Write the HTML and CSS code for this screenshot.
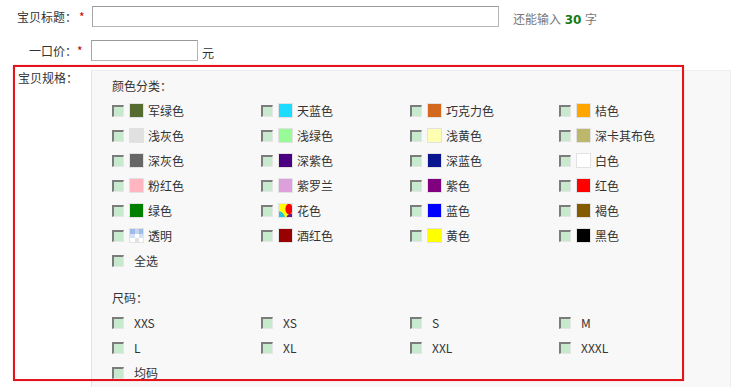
FILE: index.html
```html
<!DOCTYPE html>
<html lang="zh-CN">
<head>
<meta charset="utf-8">
<title>宝贝规格</title>
<link rel="stylesheet" href="styles.css">
</head>
<body>
<div class="page">
  <div class="field f1">
    <span class="lbl">宝贝标题：</span><span class="req">*</span>
    <input class="txt t-title" type="text">
    <span class="tip">还能输入 <b>30</b> 字</span>
  </div>
  <div class="field f2">
    <span class="lbl">一口价：</span><span class="req">*</span>
    <input class="txt t-price" type="text">
    <span class="unit">元</span>
  </div>
  <div class="spec">
    <div class="spec-lbl">宝贝规格：</div>
    <div class="panel">
      <div class="gtitle">颜色分类：</div>
      <ul class="grid">
        <li><i class="cb"></i><i class="sw" style="background:#556b2f"></i><span>军绿色</span></li>
        <li><i class="cb"></i><i class="sw" style="background:#1edcff"></i><span>天蓝色</span></li>
        <li><i class="cb"></i><i class="sw" style="background:#d2691e"></i><span>巧克力色</span></li>
        <li><i class="cb"></i><i class="sw" style="background:#ffa500"></i><span>桔色</span></li>
        <li><i class="cb"></i><i class="sw" style="background:#e0e0e0"></i><span>浅灰色</span></li>
        <li><i class="cb"></i><i class="sw" style="background:#98fb98"></i><span>浅绿色</span></li>
        <li><i class="cb"></i><i class="sw" style="background:#ffffb1"></i><span>浅黄色</span></li>
        <li><i class="cb"></i><i class="sw" style="background:#bdb76b"></i><span>深卡其布色</span></li>
        <li><i class="cb"></i><i class="sw" style="background:#666666"></i><span>深灰色</span></li>
        <li><i class="cb"></i><i class="sw" style="background:#4b0082"></i><span>深紫色</span></li>
        <li><i class="cb"></i><i class="sw" style="background:#0a1690"></i><span>深蓝色</span></li>
        <li><i class="cb"></i><i class="sw" style="background:#ffffff"></i><span>白色</span></li>
        <li><i class="cb"></i><i class="sw" style="background:#ffb6c1"></i><span>粉红色</span></li>
        <li><i class="cb"></i><i class="sw" style="background:#dda0dd"></i><span>紫罗兰</span></li>
        <li><i class="cb"></i><i class="sw" style="background:#800080"></i><span>紫色</span></li>
        <li><i class="cb"></i><i class="sw" style="background:#ff0000"></i><span>红色</span></li>
        <li><i class="cb"></i><i class="sw" style="background:#008000"></i><span>绿色</span></li>
        <li><i class="cb"></i><i class="sw sw-svg"><svg width="13" height="13" viewBox="0 0 13 13"><rect width="13" height="13" fill="#ffff00"/><path d="M0 7.5 Q4 7 6 13 H0Z" fill="#2bc4e0"/><ellipse cx="10" cy="5" rx="3.6" ry="5.2" fill="#ff0000"/><path d="M7.5 13 Q8.5 9.5 13 9.5 V13Z" fill="#6a1b8a"/></svg></i><span>花色</span></li>
        <li><i class="cb"></i><i class="sw" style="background:#0000ff"></i><span>蓝色</span></li>
        <li><i class="cb"></i><i class="sw" style="background:#855b00"></i><span>褐色</span></li>
        <li><i class="cb"></i><i class="sw sw-svg"><svg width="13" height="13" viewBox="0 0 13 13"><rect width="13" height="13" fill="#ffffff"/><rect x="0" y="0" width="5" height="5" fill="#9fbbe8"/><rect x="5" y="0" width="4" height="5" fill="#c6d6f2"/><rect x="9" y="0" width="4" height="5" fill="#9fbbe8"/><rect x="0" y="5" width="5" height="4" fill="#d4e0f5"/><rect x="9" y="5" width="4" height="4" fill="#d4e0f5"/><rect x="5" y="9" width="4" height="4" fill="#e2e2e2"/></svg></i><span>透明</span></li>
        <li><i class="cb"></i><i class="sw" style="background:#990000"></i><span>酒红色</span></li>
        <li><i class="cb"></i><i class="sw" style="background:#ffff00"></i><span>黄色</span></li>
        <li><i class="cb"></i><i class="sw" style="background:#000000"></i><span>黑色</span></li>
        <li class="plain"><i class="cb"></i><span>全选</span></li>
      </ul>
      <div class="gtitle size-title">尺码：</div>
      <ul class="grid">
        <li class="plain"><i class="cb"></i><span>XXS</span></li>
        <li class="plain"><i class="cb"></i><span>XS</span></li>
        <li class="plain"><i class="cb"></i><span>S</span></li>
        <li class="plain"><i class="cb"></i><span>M</span></li>
        <li class="plain"><i class="cb"></i><span>L</span></li>
        <li class="plain"><i class="cb"></i><span>XL</span></li>
        <li class="plain"><i class="cb"></i><span>XXL</span></li>
        <li class="plain"><i class="cb"></i><span>XXXL</span></li>
        <li class="plain"><i class="cb"></i><span>均码</span></li>
      </ul>
    </div>
    <div class="mark"></div>
  </div>
</div>
</body>
</html>
```
FILE: styles.css
```css
* { box-sizing: border-box; }
html, body { margin: 0; padding: 0; background: #ffffff; }
body {
  font-family: "Noto Sans CJK SC", "DejaVu Sans", sans-serif;
  font-size: 12px;
  color: #333333;
  overflow: hidden;
}
.page { width: 738px; }

.field { display: flex; align-items: center; height: 21px; }
.f1 { margin-top: 6px; }
.f2 { margin-top: 13px; }
.lbl { width: 77px; text-align: right; line-height: 16px; white-space: nowrap; }
.req { width: 15px; padding-left: 2px; color: #cc0000; line-height: 16px; }
.f2 .req { width: 14px; padding-left: 0; }
.txt {
  height: 21px;
  margin: 0;
  padding: 0 3px;
  border: 1px solid #b5b5b5;
  border-top-color: #9a9a9a;
  border-left-color: #a5a5a5;
  background: #fff;
  font: inherit;
}
.t-title { width: 407px; }
.t-price { width: 107px; }
.tip { margin-left: 14px; padding-top: 6px; color: #777; line-height: 16px; }
.tip b { font-family: "DejaVu Sans", sans-serif; font-weight: bold; color: #137a13; font-size: 12px; margin: 0 1px; }
.unit { margin-left: 4px; padding-top: 5px; line-height: 16px; color: #333; }

.spec { position: relative; display: flex; margin-top: 9px; }
.spec-lbl { width: 91px; padding-left: 18px; line-height: 16px; }
.panel {
  width: 640px;
  height: 330px;
  background: #f8f8f8;
  border-left: 1px solid #e4e4e4;
  border-top: 1px solid #eeeeee;
  border-right: 1px solid #eeeeee;
  padding: 2px 0 0 20px;
}
.gtitle { line-height: 25px; height: 25px; }
.size-title { margin-top: 12px; }
.grid {
  list-style: none;
  margin: 0;
  padding: 0;
  display: grid;
  grid-template-columns: repeat(4, 149px);
  grid-auto-rows: 25px;
}
.grid li { display: flex; align-items: center; white-space: nowrap; line-height: 16px; }
.cb {
  display: block;
  width: 12px;
  height: 12px;
  background: #c7eace;
  border-top: 2px solid #7c7c7c;
  border-left: 2px solid #7c7c7c;
  border-right: 1px solid #e6e6e6;
  border-bottom: 1px solid #e6e6e6;
  flex: none;
}
.sw {
  display: block;
  width: 15px;
  height: 15px;
  margin-left: 5px;
  margin-right: 4px;
  border: 1px solid #e2e2e2;
  flex: none;
}
.sw-svg { padding: 0; }
.sw-svg svg { display: block; }
.plain span { margin-left: 10px; }

.mark {
  position: absolute;
  left: 13px;
  top: -5px;
  width: 671px;
  height: 316px;
  border: 2px solid #e3141c;
  box-shadow: 0 0 1px 0 rgba(255, 90, 90, 0.6);
  pointer-events: none;
}
```
